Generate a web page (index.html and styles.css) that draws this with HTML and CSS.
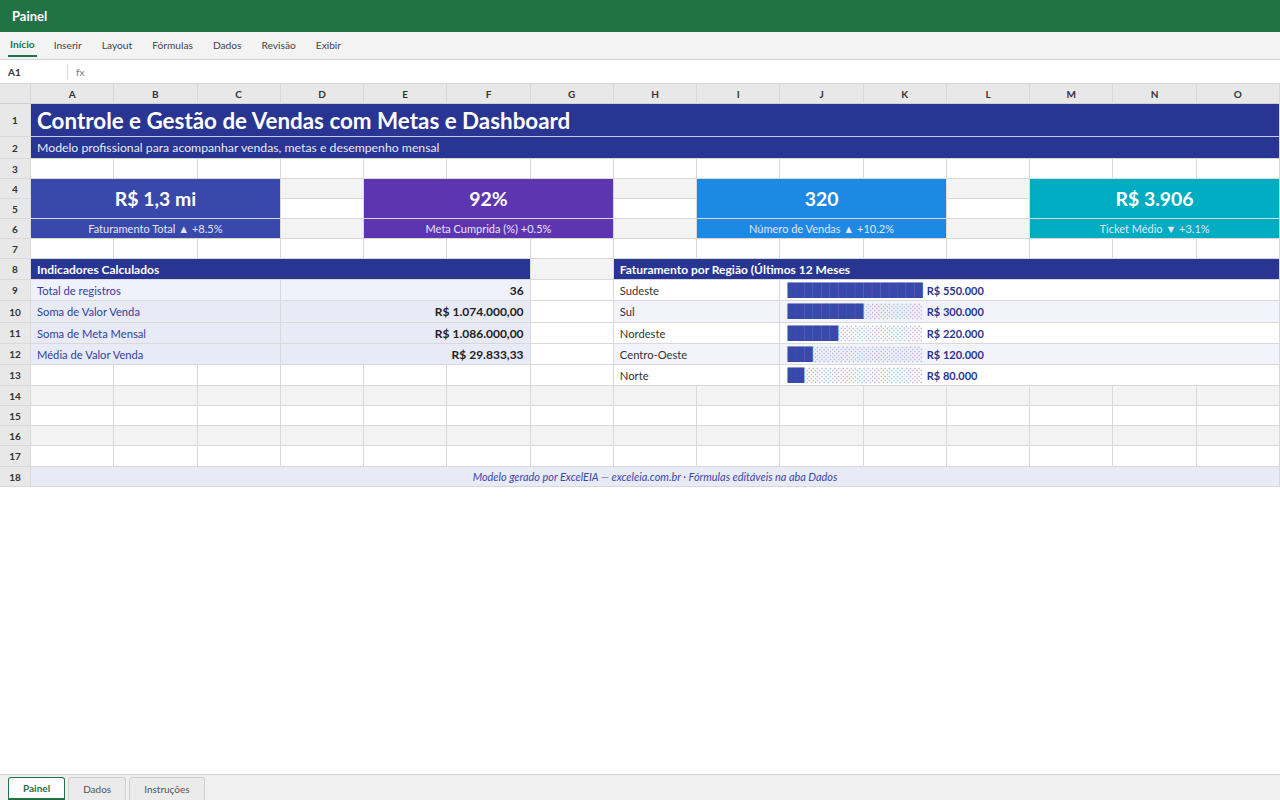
FILE: index.html
```html
<!DOCTYPE html>
<html lang="pt-BR">
<head>
  <meta charset="UTF-8" />
  <title>Painel</title>
  <link rel="stylesheet" href="styles.css">
</head>
<body>
  <header class="app-bar">Painel</header>

  <nav class="ribbon">
    <span class="tab active">Início</span>
    <span class="tab">Inserir</span>
    <span class="tab">Layout</span>
    <span class="tab">Fórmulas</span>
    <span class="tab">Dados</span>
    <span class="tab">Revisão</span>
    <span class="tab">Exibir</span>
  </nav>

  <div class="formula-bar">
    <span class="cell-ref">A1</span>
    <span class="fx">fx</span>
  </div>

  <div class="sheet">
    <!-- column headers -->
    <div class="corner"></div>
    <div class="col-h">A</div><div class="col-h">B</div><div class="col-h">C</div><div class="col-h">D</div>
    <div class="col-h">E</div><div class="col-h">F</div><div class="col-h">G</div><div class="col-h">H</div>
    <div class="col-h">I</div><div class="col-h">J</div><div class="col-h">K</div><div class="col-h">L</div>
    <div class="col-h">M</div><div class="col-h">N</div><div class="col-h">O</div>

    <!-- 1 -->
    <div class="row-h">1</div>
    <div class="c title span-15">Controle e Gestão de Vendas com Metas e Dashboard</div>

    <!-- 2 -->
    <div class="row-h">2</div>
    <div class="c subtitle span-15">Modelo profissional para acompanhar vendas, metas e desempenho mensal</div>

    <!-- 3 -->
    <div class="row-h">3</div>
    <div class="c"></div><div class="c"></div><div class="c"></div><div class="c"></div><div class="c"></div>
    <div class="c"></div><div class="c"></div><div class="c"></div><div class="c"></div><div class="c"></div>
    <div class="c"></div><div class="c"></div><div class="c"></div><div class="c"></div><div class="c"></div>

    <!-- 4 / 5 -->
    <div class="row-h">4</div>
    <div class="c kpi-value k-indigo">R$ 1,3 mi</div>
    <div class="c alt"></div>
    <div class="c kpi-value k-purple">92%</div>
    <div class="c alt"></div>
    <div class="c kpi-value k-blue">320</div>
    <div class="c alt"></div>
    <div class="c kpi-value k-cyan">R$ 3.906</div>

    <div class="row-h">5</div>
    <div class="c"></div>
    <div class="c"></div>
    <div class="c"></div>

    <!-- 6 -->
    <div class="row-h">6</div>
    <div class="c kpi-label k-indigo span-3">Faturamento Total ▲ +8.5%</div>
    <div class="c alt"></div>
    <div class="c kpi-label k-purple span-3">Meta Cumprida (%) +0.5%</div>
    <div class="c alt"></div>
    <div class="c kpi-label k-blue span-3">Número de Vendas ▲ +10.2%</div>
    <div class="c alt"></div>
    <div class="c kpi-label k-cyan span-3">Ticket Médio ▼ +3.1%</div>

    <!-- 7 -->
    <div class="row-h">7</div>
    <div class="c"></div><div class="c"></div><div class="c"></div><div class="c"></div><div class="c"></div>
    <div class="c"></div><div class="c"></div><div class="c"></div><div class="c"></div><div class="c"></div>
    <div class="c"></div><div class="c"></div><div class="c"></div><div class="c"></div><div class="c"></div>

    <!-- 8 -->
    <div class="row-h">8</div>
    <div class="c section span-6">Indicadores Calculados</div>
    <div class="c alt"></div>
    <div class="c section span-8">Faturamento por Região (Últimos 12 Meses</div>

    <!-- 9 -->
    <div class="row-h">9</div>
    <div class="c ind-label band-a span-3">Total de registros</div>
    <div class="c ind-value band-a span-3">36</div>
    <div class="c"></div>
    <div class="c region span-2">Sudeste</div>
    <div class="c bar-cell span-6"><span class="bar"><span class="fill">████████████████</span></span><b>R$ 550.000</b></div>

    <!-- 10 -->
    <div class="row-h">10</div>
    <div class="c ind-label band-b span-3">Soma de Valor Venda</div>
    <div class="c ind-value band-b span-3">R$ 1.074.000,00</div>
    <div class="c"></div>
    <div class="c region zebra span-2">Sul</div>
    <div class="c bar-cell zebra span-6"><span class="bar"><span class="fill">█████████</span><span class="rest">░░░░░░░</span></span><b>R$ 300.000</b></div>

    <!-- 11 -->
    <div class="row-h">11</div>
    <div class="c ind-label band-b span-3">Soma de Meta Mensal</div>
    <div class="c ind-value band-b span-3">R$ 1.086.000,00</div>
    <div class="c"></div>
    <div class="c region span-2">Nordeste</div>
    <div class="c bar-cell span-6"><span class="bar"><span class="fill">██████</span><span class="rest">░░░░░░░░░░</span></span><b>R$ 220.000</b></div>

    <!-- 12 -->
    <div class="row-h">12</div>
    <div class="c ind-label band-b span-3">Média de Valor Venda</div>
    <div class="c ind-value band-b span-3">R$ 29.833,33</div>
    <div class="c"></div>
    <div class="c region zebra span-2">Centro-Oeste</div>
    <div class="c bar-cell zebra span-6"><span class="bar"><span class="fill">███</span><span class="rest">░░░░░░░░░░░░░</span></span><b>R$ 120.000</b></div>

    <!-- 13 -->
    <div class="row-h">13</div>
    <div class="c"></div><div class="c"></div><div class="c"></div><div class="c"></div><div class="c"></div><div class="c"></div>
    <div class="c"></div>
    <div class="c region span-2">Norte</div>
    <div class="c bar-cell span-6"><span class="bar"><span class="fill">██</span><span class="rest">░░░░░░░░░░░░░░</span></span><b>R$ 80.000</b></div>

    <!-- 14 - 17 -->
    <div class="row-h">14</div>
    <div class="c alt"></div><div class="c alt"></div><div class="c alt"></div><div class="c alt"></div><div class="c alt"></div>
    <div class="c alt"></div><div class="c alt"></div><div class="c alt"></div><div class="c alt"></div><div class="c alt"></div>
    <div class="c alt"></div><div class="c alt"></div><div class="c alt"></div><div class="c alt"></div><div class="c alt"></div>

    <div class="row-h">15</div>
    <div class="c"></div><div class="c"></div><div class="c"></div><div class="c"></div><div class="c"></div>
    <div class="c"></div><div class="c"></div><div class="c"></div><div class="c"></div><div class="c"></div>
    <div class="c"></div><div class="c"></div><div class="c"></div><div class="c"></div><div class="c"></div>

    <div class="row-h">16</div>
    <div class="c alt"></div><div class="c alt"></div><div class="c alt"></div><div class="c alt"></div><div class="c alt"></div>
    <div class="c alt"></div><div class="c alt"></div><div class="c alt"></div><div class="c alt"></div><div class="c alt"></div>
    <div class="c alt"></div><div class="c alt"></div><div class="c alt"></div><div class="c alt"></div><div class="c alt"></div>

    <div class="row-h">17</div>
    <div class="c"></div><div class="c"></div><div class="c"></div><div class="c"></div><div class="c"></div>
    <div class="c"></div><div class="c"></div><div class="c"></div><div class="c"></div><div class="c"></div>
    <div class="c"></div><div class="c"></div><div class="c"></div><div class="c"></div><div class="c"></div>

    <!-- 18 -->
    <div class="row-h">18</div>
    <div class="c footer-note span-15">Modelo gerado por ExcelEIA — exceleia.com.br · Fórmulas editáveis na aba Dados</div>
  </div>

  <div class="spacer"></div>

  <footer class="sheet-tabs">
    <span class="sheet-tab active">Painel</span>
    <span class="sheet-tab">Dados</span>
    <span class="sheet-tab">Instruções</span>
  </footer>
</body>
</html>
```

FILE: styles.css
```css
:root {
  --green: #217346;
  --navy: #283593;
  --grid-line: #d9d9d9;
  --head-bg: #e8e8e8;
}

* {
  box-sizing: border-box;
}

body {
  margin: 0;
  height: 100vh;
  display: flex;
  flex-direction: column;
  font-family: 'Lato', 'Open Sans', sans-serif;
  color: #222;
  background: #fff;
}

.app-bar {
  height: 32px;
  background: var(--green);
  color: #fff;
  font-weight: 700;
  font-size: 13px;
  padding: 0 12px;
  display: flex;
  align-items: center;
}

.ribbon {
  height: 28px;
  background: #f3f3f3;
  border-bottom: 1px solid #d4d4d4;
  display: flex;
  align-items: stretch;
  padding: 0 8px;
  gap: 20px;
}

.tab {
  font-size: 10.2px;
  color: #444;
  display: flex;
  align-items: center;
  padding-bottom: 2px;
}

.tab.active {
  color: var(--green);
  font-weight: 700;
  padding: 0 2px;
  margin-right: -3px;
  border-bottom: 2px solid var(--green);
  margin-bottom: 2px;
}

.formula-bar {
  height: 24px;
  background: #fff;
  border-bottom: 1px solid #d4d4d4;
  display: flex;
  align-items: center;
  font-size: 10px;
}

.cell-ref {
  width: 68px;
  padding-left: 8px;
  font-weight: 700;
  color: #333;
  border-right: 1px solid #d4d4d4;
  line-height: 14px;
}

.fx {
  padding-left: 8px;
  color: #777;
}

.sheet {
  display: grid;
  grid-template-columns: 31px repeat(15, 1fr);
  grid-template-rows: 20px 33px 22px 20px 20px 20px 20px 20px 21px 21px 22px 21px 21px 21px 20px 20px 20px 21px 20px;
  font-size: 12px;
}

.sheet > div {
  border-right: 1px solid var(--grid-line);
  border-bottom: 1px solid var(--grid-line);
  min-width: 0;
  white-space: nowrap;
  overflow: hidden;
}

.corner,
.col-h,
.row-h {
  background: var(--head-bg);
  color: #333;
  font-weight: 700;
  font-size: 10px;
  display: flex;
  align-items: center;
  justify-content: center;
}

.corner,
.col-h {
  border-bottom-color: #cfcfcf !important;
}

.c {
  display: flex;
  align-items: center;
  padding: 0 6px;
}

.alt {
  background: #f3f3f3;
}

.span-2 { grid-column: span 2; }
.span-3 { grid-column: span 3; }
.span-6 { grid-column: span 6; }
.span-8 { grid-column: span 8; }
.span-15 { grid-column: span 15; }

.title {
  background: var(--navy);
  color: #fff;
  font-size: 22.4px;
  font-weight: 700;
  border-bottom-color: #c5cae9 !important;
}

.subtitle {
  background: var(--navy);
  color: #e8eaf6;
  font-size: 12.25px;
}

.kpi-value {
  grid-column: span 3;
  grid-row: span 2;
  justify-content: center;
  color: #fff;
  font-size: 19.4px;
  font-weight: 700;
}

.kpi-label {
  justify-content: center;
  color: #e3e6f7;
  font-size: 11px;
}

.k-indigo { background: #3949ab; }
.k-purple { background: #5e35b1; }
.k-blue { background: #1e88e5; }
.k-cyan { background: #00acc1; }

.section {
  background: var(--navy);
  color: #fff;
  font-weight: 700;
}

.ind-label {
  color: #303f9f;
  font-size: 11.2px;
}

.ind-value {
  justify-content: flex-end;
  font-weight: 700;
  color: #222;
}

.band-a { background: #f0f1fa; }
.band-b { background: #e8eaf6; }

.region {
  color: #333;
  font-size: 11.2px;
}

.zebra {
  background: #f3f4fb;
}

.bar-cell {
  padding-left: 7px;
}

.bar {
  display: inline-block;
  font-family: 'DejaVu Sans', sans-serif;
  font-size: 11px;
  line-height: 1;
  margin-right: 4px;
  transform: scaleY(1.2);
}

.fill {
  color: #3949ab;
}

.rest {
  color: #a3abdb;
}

.bar-cell b {
  color: var(--navy);
  font-size: 11px;
}

.footer-note {
  background: #e8eaf6;
  color: #3949ab;
  font-style: italic;
  font-size: 10.9px;
  justify-content: center;
}

.spacer {
  flex: 1;
}

.sheet-tabs {
  height: 26px;
  background: #f0f0f0;
  border-top: 1px solid #d0d0d0;
  display: flex;
  align-items: flex-end;
  gap: 3px;
  padding: 0 8px;
}

.sheet-tab {
  height: 23px;
  background: #ebebeb;
  border: 1px solid #cfcfcf;
  border-bottom: none;
  border-radius: 3px 3px 0 0;
  font-size: 10px;
  color: #555;
  padding: 0 14px;
  display: flex;
  align-items: center;
}

.sheet-tab.active {
  background: #fff;
  border: 1px solid var(--green);
  border-bottom: 2px solid var(--green);
  color: var(--green);
  font-weight: 700;
}
```
